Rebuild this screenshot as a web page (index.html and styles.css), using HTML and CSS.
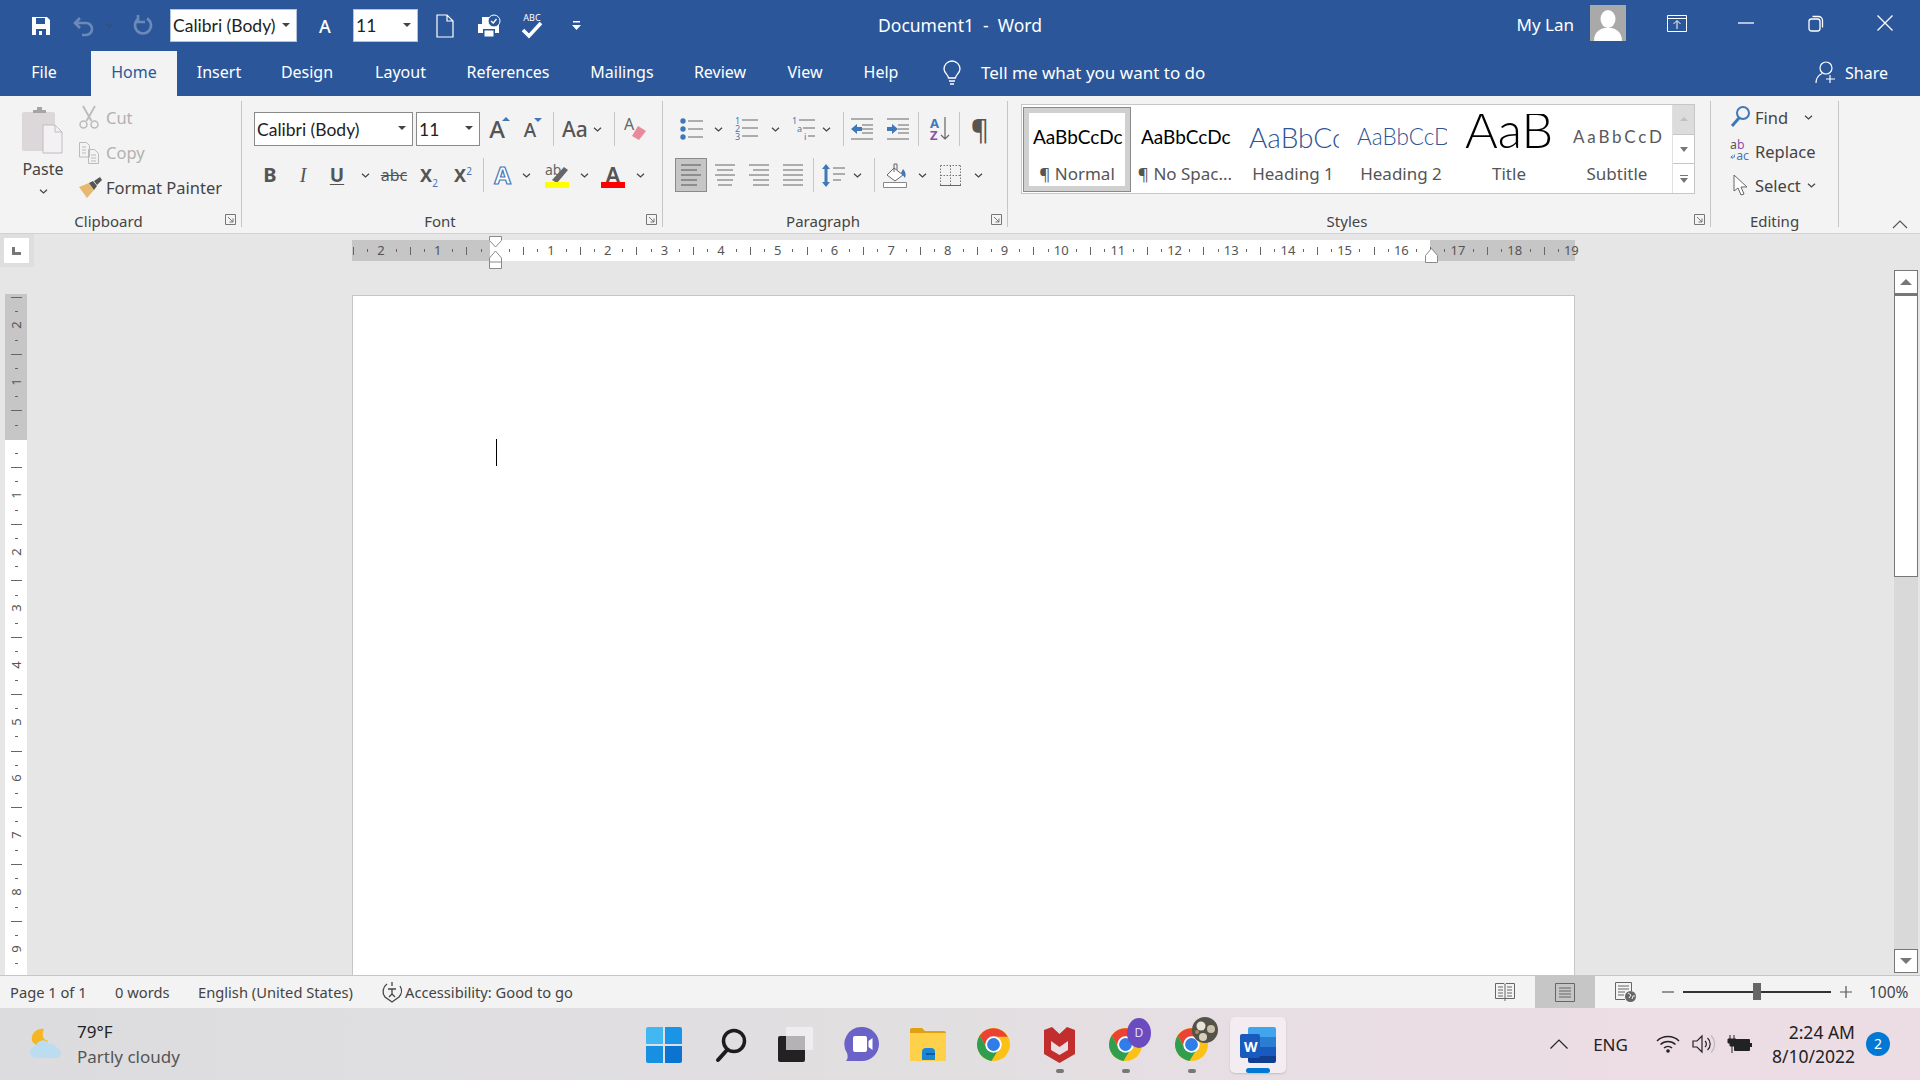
FILE: index.html
```html
<!DOCTYPE html>
<html>
<head>
  <title>Document1 - Word</title>
  <link rel="stylesheet" href="styles.css">
</head>
<body>
<svg class="defs" width="0" height="0">
  <symbol id="chev" viewBox="0 0 9 5"><path d="M1 .7l3.5 3.3L8 .7" fill="none" stroke="#444" stroke-width="1.2"/></symbol>
  <symbol id="launch" viewBox="0 0 11 11"><path d="M.5 10.5V.5h10v10zM3 3l5 5M8 4.5V8H4.5" fill="none" stroke="#777"/></symbol>
  <symbol id="chrome" viewBox="0 0 32 32">
    <circle cx="16" cy="16" r="16" fill="#fbc116"/>
    <path d="M16 8.5h13.9A16 16 0 0 0 2.6 7.3L9.5 19.6z" fill="#ea4335"/>
    <path d="M2.6 7.3A16 16 0 0 0 14 31.9l7.5-12.3H9.5z" fill="#2f9e4f"/>
    <circle cx="16" cy="16" r="8" fill="#fff"/>
    <circle cx="16" cy="16" r="6.2" fill="#2f7de8"/>
  </symbol>
</svg>

<div class="app">
  <!-- title bar -->
  <div class="titlebar">
    <div class="qat">
      <svg class="ic" width="20" height="20" viewBox="0 0 20 20"><path d="M1 1h15l3 3v15H1z" fill="#fff"/><path d="M5 2h9v6H5z" fill="#2b579a"/><path d="M5 13h10v6H5z" fill="#2b579a"/><path d="M8 15h3v4H8z" fill="#fff"/></svg>
      <i></i>
      <svg class="ic" width="22" height="20" viewBox="0 0 22 20"><path d="M7 2L2 7l5 5M2 7h11a6 6 0 0 1 0 12H9" fill="none" stroke="#6c8ab8" stroke-width="2.6"/></svg>
      <svg class="chev faded" width="9" height="5"><use href="#chev"/></svg>
      <svg class="ic" width="20" height="22" viewBox="0 0 20 22"><path d="M6 3.500a8 8 0 1 0 8 0M5 0v7h7" fill="none" stroke="#6c8ab8" stroke-width="2.6"/></svg>
      <div class="qat-box">Calibri (Body)<b class="drop"></b></div>
      <span class="qat-a">A</span>
      <i></i>
      <div class="qat-box qat-size">11<b class="drop"></b></div>
      <svg class="ic" width="18" height="24" viewBox="0 0 18 24"><path d="M1 1h10l6 6v16H1zM11 1v6h6" fill="none" stroke="#fff" stroke-width="1.200"/></svg>
      <svg class="ic" width="24" height="24" viewBox="0 0 24 24"><path d="M1 10h4V3h11v7h6v9h-4v-4H6v4H1z" fill="#fff"/><path d="M7 16h10v7H7z" fill="#fff" stroke="#2b579a"/><circle cx="17" cy="7" r="6" fill="#2b579a" stroke="#fff"/><path d="M14 7l2.200 2 3.300-4" fill="none" stroke="#fff" stroke-width="1.300"/></svg>
      <svg class="ic" width="24" height="28" viewBox="0 0 24 28"><text x="12" y="9" text-anchor="middle" class="abc">ABC</text><path d="M3 18l6 6L21 11" fill="none" stroke="#fff" stroke-width="3.600"/></svg>
      <svg class="ic" width="9" height="9" viewBox="0 0 9 9"><path d="M1 0h7v1.500H1zM0 4h9L4.500 9z" fill="#fff"/></svg>
    </div>
    <div class="doc-title">Document1&nbsp; -&nbsp; Word</div>
    <div class="win">
      <span class="user">My Lan</span>
      <svg class="avatar" width="36" height="36" viewBox="0 0 36 36"><rect width="36" height="36" fill="#a9a9a9"/><ellipse cx="18" cy="14" rx="7.500" ry="9" fill="#fff"/><path d="M4 36c0-10 7-12 10-13h8c3 1 10 3 10 13z" fill="#fff"/></svg>
      <span class="win-btn"><svg width="20" height="17" viewBox="0 0 20 17"><path d="M.5.500h19v16H.5zM.5 3.500h19M10 14V6M6.500 9L10 5.500 13.500 9" fill="none" stroke="#fff"/></svg></span>
      <span class="win-btn"><svg width="16" height="2" viewBox="0 0 16 2"><path d="M0 1h16" stroke="#fff" stroke-width="1.300"/></svg></span>
      <span class="win-btn"><svg width="16" height="17" viewBox="0 0 16 17"><rect x="1" y="4" width="11" height="12" rx="2.500" fill="none" stroke="#fff" stroke-width="1.300"/><path d="M4.500 1.500h6a4 4 0 0 1 4 4v7" fill="none" stroke="#fff" stroke-width="1.300"/></svg></span>
      <span class="win-btn"><svg width="16" height="16" viewBox="0 0 16 16"><path d="M.5.500l15 15M15.500.500l-15 15" stroke="#fff" stroke-width="1.300"/></svg></span>
    </div>
  </div>

  <!-- tabs -->
  <div class="tabs">
    <div class="tab-list">
      <span>File</span><i></i><span class="tab-on">Home</span><span>Insert</span><span>Design</span><span>Layout</span><span>References</span><span>Mailings</span><span>Review</span><span>View</span><span>Help</span>
      <span class="tell">
        <svg width="18" height="25" viewBox="0 0 18 25"><path d="M5.500 17c0-3-4.500-5-4.500-9a8 8 0 0 1 16 0c0 4-4.500 6-4.500 9zM6 20h6M7 23h4" fill="none" stroke="#fff" stroke-width="1.300"/></svg>
        <em>Tell me what you want to do</em>
      </span>
    </div>
    <div class="share">
      <svg width="22" height="23" viewBox="0 0 22 23"><circle cx="11" cy="7" r="6" fill="none" stroke="#fff" stroke-width="1.200"/><path d="M1 22c0-5 3-8 6-9.500M15 14v8M11 18h9" fill="none" stroke="#fff" stroke-width="1.200"/></svg>
      <span>Share</span>
    </div>
  </div>

  <!-- ribbon -->
  <div class="ribbon">
    <section class="group g-clip">
      <div class="clip">
        <div class="paste">
          <svg width="42" height="46" viewBox="0 0 42 46"><rect y="5" width="33" height="39" rx="2" fill="#dcd8da"/><path d="M11 6V3h4V0h5v3h4v3z" fill="#a8a4a6"/><path d="M21 18h12l7 7v21H21z" fill="#f4f1f5" stroke="#c0bcc0"/><path d="M33 18v7h7" fill="none" stroke="#c0bcc0"/></svg>
          <span>Paste</span>
          <svg class="chev" width="9" height="5"><use href="#chev"/></svg>
        </div>
        <div class="clip-list">
          <div class="clip-row off"><svg width="20" height="23" viewBox="0 0 20 23"><path d="M4 0l8.500 15M16 0L7.500 15" stroke="#bbb" stroke-width="1.800" fill="none"/><circle cx="4.500" cy="18.500" r="3.500" fill="none" stroke="#bbb" stroke-width="1.500"/><circle cx="15.500" cy="18.500" r="3.500" fill="none" stroke="#bbb" stroke-width="1.500"/></svg><span>Cut</span></div>
          <div class="clip-row off"><svg width="20" height="22" viewBox="0 0 20 22"><path d="M.5.500h7l3 3V15H.5zM9.500 7.500h6l4 4v10h-10zM3 5h4M3 8h4M3 11h4M12 13h5M12 16h5M12 19h5" fill="none" stroke="#bbb"/></svg><span>Copy</span></div>
          <div class="clip-row painter"><svg width="23" height="21" viewBox="0 0 23 21"><path d="M0 10l10-4 5 7-7 8z" fill="#e6b870"/><path d="M10 6l5 7 3-4-4-5zM15 4l6-4 2 3-5 5z" fill="#555"/></svg><span>Format Painter</span></div>
        </div>
      </div>
      <div class="label">Clipboard</div>
      <svg class="launch" width="11" height="11"><use href="#launch"/></svg>
    </section>

    <section class="group g-font">
      <div class="row font-r1">
        <div class="combo">Calibri (Body)<b class="drop"></b></div>
        <div class="combo combo-size">11<b class="drop"></b></div>
        <span class="fa grow">A<u class="tri up"></u></span>
        <span class="fa shrink">A<u class="tri down"></u></span>
        <s class="sep"></s>
        <span class="fa aa">Aa</span>
        <svg class="chev" width="9" height="5"><use href="#chev"/></svg>
        <s class="sep"></s>
        <svg class="ic" width="24" height="24" viewBox="0 0 24 24"><text x="0" y="13" class="ic-t">A</text><path d="M14 9l8 5-7 9-7-4z" fill="#e88a9c"/></svg>
      </div>
      <div class="row font-r2">
        <span class="fa bold">B</span>
        <span class="fa ital">I</span>
        <span class="fa und">U</span>
        <svg class="chev" width="9" height="5"><use href="#chev"/></svg>
        <span class="fa strike">abc</span>
        <span class="fa xs">X<sub>2</sub></span>
        <span class="fa xs">X<sup>2</sup></span>
        <s class="sep"></s>
        <span class="fa fx">A</span>
        <svg class="chev" width="9" height="5"><use href="#chev"/></svg>
        <i></i>
        <svg class="ic" width="24" height="25" viewBox="0 0 24 25"><text x="0" y="12" class="ic-t ic-s">ab</text><path d="M7 17l12-13 4 3-11 13z" fill="#666"/><path d="M0 19h24v6H0z" fill="#ff0"/></svg>
        <svg class="chev" width="9" height="5"><use href="#chev"/></svg>
        <span class="color-a">A<u></u></span>
        <svg class="chev" width="9" height="5"><use href="#chev"/></svg>
      </div>
      <div class="label">Font</div>
      <svg class="launch" width="11" height="11"><use href="#launch"/></svg>
    </section>

    <section class="group g-para">
      <div class="row para-r1">
        <svg class="ic" width="23" height="22" viewBox="0 0 23 22"><g fill="#3f78b8"><circle cx="3" cy="3" r="2.700"/><circle cx="3" cy="11" r="2.700"/><circle cx="3" cy="19" r="2.700"/></g><path d="M8 3h15M8 11h15M8 19h15" stroke="#666"/></svg>
        <svg class="chev" width="9" height="5"><use href="#chev"/></svg>
        <svg class="ic" width="23" height="24" viewBox="0 0 23 24"><g class="num"><text x="0" y="7">1</text><text x="0" y="15">2</text><text x="0" y="23">3</text></g><path d="M7 3h16M7 11h16M7 19h16" stroke="#666"/></svg>
        <svg class="chev" width="9" height="5"><use href="#chev"/></svg>
        <svg class="ic" width="23" height="24" viewBox="0 0 23 24"><g class="num"><text x="0" y="7">1</text><text x="5" y="15">a</text><text x="12" y="23">i</text></g><path d="M7 3h16M11 11h12M16 19h7" stroke="#666"/></svg>
        <svg class="chev" width="9" height="5"><use href="#chev"/></svg>
        <s class="sep"></s>
        <svg class="ic" width="23" height="22" viewBox="0 0 23 22"><path d="M0 1h22M11 7h11M11 11h11M11 15h11M0 21h22" stroke="#666"/><path d="M0 11l6-5v3h5v4H6v3z" fill="#3f78b8"/></svg>
        <svg class="ic" width="23" height="22" viewBox="0 0 23 22"><path d="M0 1h22M11 7h11M11 11h11M11 15h11M0 21h22" stroke="#666"/><path d="M11 11L5 6v3H0v4h5v3z" fill="#3f78b8"/></svg>
        <s class="sep"></s>
        <svg class="ic" width="19" height="24" viewBox="0 0 19 24"><text x="0" y="11" class="az az-a">A</text><text x="0" y="23" class="az az-z">Z</text><path d="M15 0v22M11 18l4 4 4-4" fill="none" stroke="#666" stroke-width="1.200"/></svg>
        <s class="sep"></s>
        <span class="pilcrow">¶</span>
      </div>
      <div class="row para-r2">
        <span class="align-on"><svg class="ic" width="20" height="22" viewBox="0 0 20 22"><path d="M0 1h20M0 6h16M0 11h20M0 16h16M0 21h16" stroke="#555"/></svg></span>
        <svg class="ic" width="20" height="22" viewBox="0 0 20 22"><path d="M0 1h20M2 6h16M0 11h20M2 16h16M3 21h14" stroke="#666"/></svg>
        <svg class="ic" width="20" height="22" viewBox="0 0 20 22"><path d="M0 1h20M4 6h16M0 11h20M4 16h16M4 21h16" stroke="#666"/></svg>
        <svg class="ic" width="20" height="22" viewBox="0 0 20 22"><path d="M0 1h20M0 6h20M0 11h20M0 16h20M0 21h20" stroke="#666"/></svg>
        <s class="sep"></s>
        <svg class="ic" width="23" height="23" viewBox="0 0 23 23"><path d="M4 0l4 5H5.500v13H8l-4 5-4-5h2.500V5H0z" fill="#3f78b8"/><path d="M11 4h12M11 10h12M11 16h8" stroke="#666"/></svg>
        <svg class="chev" width="9" height="5"><use href="#chev"/></svg>
        <s class="sep"></s>
        <svg class="ic" width="24" height="25" viewBox="0 0 24 25"><path d="M11 5l9 7-8 6-8-6z" fill="#fff" stroke="#666"/><path d="M11 9V1h3v6" fill="none" stroke="#666"/><path d="M20 6c3 3 3 6 2 9-2-2-2-4-4-5z" fill="#3f78b8"/><path d="M.5 19.500h23v5H.5z" fill="#fff" stroke="#888"/></svg>
        <svg class="chev" width="9" height="5"><use href="#chev"/></svg>
        <svg class="ic" width="21" height="21" viewBox="0 0 21 21"><path d="M.5.500h20M.5.500v20M20.500.500v20M10.500.500v20M.5 10.500h20" fill="none" stroke="#777" stroke-dasharray="1.500 1.500"/><path d="M0 20.500h21" stroke="#666"/></svg>
        <svg class="chev" width="9" height="5"><use href="#chev"/></svg>
      </div>
      <div class="label">Paragraph</div>
      <svg class="launch" width="11" height="11"><use href="#launch"/></svg>
    </section>

    <section class="group g-styles">
      <div class="gallery">
        <div class="style style-on"><div class="preview s-normal">AaBbCcDc</div><div class="style-name">¶ Normal</div></div>
        <div class="style"><div class="preview s-normal">AaBbCcDc</div><div class="style-name">¶ No Spac...</div></div>
        <div class="style"><div class="preview s-h1">AaBbCcDc</div><div class="style-name">Heading 1</div></div>
        <div class="style"><div class="preview s-h2">AaBbCcDc</div><div class="style-name">Heading 2</div></div>
        <div class="style"><div class="preview s-title">AaB</div><div class="style-name">Title</div></div>
        <div class="style"><div class="preview s-sub">AaBbCcDc</div><div class="style-name">Subtitle</div></div>
        <div class="gal-scroll">
          <span class="gal-up"><u class="gal-tri"></u></span>
          <span><u class="gal-tri"></u></span>
          <span><u class="gal-more"></u><u class="gal-tri"></u></span>
        </div>
      </div>
      <div class="label">Styles</div>
      <svg class="launch" width="11" height="11"><use href="#launch"/></svg>
    </section>

    <section class="group g-edit">
      <div class="edit-list">
        <div class="edit-row"><svg width="19" height="22" viewBox="0 0 19 22"><circle cx="12" cy="7" r="6" fill="none" stroke="#3f78b8" stroke-width="2"/><path d="M8 12l-7 8" stroke="#3f78b8" stroke-width="3"/></svg><span>Find</span><svg class="chev chev-find" width="9" height="5"><use href="#chev"/></svg></div>
        <div class="edit-row"><svg class="rep" width="24" height="24" viewBox="0 0 24 24"><text x="0" y="10" class="rep-ab">a<tspan fill="#8a50a8">b</tspan></text><text x="7" y="22" class="rep-ac">ac</text><path d="M5 16v3H1M3 17l-2 2 2 2" fill="none" stroke="#3f78b8"/></svg><span>Replace</span></div>
        <div class="edit-row"><svg width="15" height="22" viewBox="0 0 15 22"><path d="M1 1v16l4-3 3 7 3-1-3-7h6z" fill="#fff" stroke="#666"/></svg><span>Select</span><svg class="chev chev-sel" width="9" height="5"><use href="#chev"/></svg></div>
      </div>
      <div class="label">Editing</div>
    </section>

    <svg class="collapse" width="16" height="9" viewBox="0 0 16 9"><path d="M1 8l7-7 7 7" fill="none" stroke="#555" stroke-width="1.200"/></svg>
  </div>

  <!-- document area -->
  <div class="docarea">
    <div class="side">
      <div class="tabstop"><span><u></u></span></div>
      <div class="vruler">
        <span class="cell"><b>2</b></span><span class="cell"><b>1</b></span><span class="cell"></span>
        <span class="cell"><b>1</b></span><span class="cell"><b>2</b></span><span class="cell"><b>3</b></span><span class="cell"><b>4</b></span><span class="cell"><b>5</b></span><span class="cell"><b>6</b></span><span class="cell"><b>7</b></span><span class="cell"><b>8</b></span><span class="cell"><b>9</b></span>
      </div>
    </div>
    <div class="center">
      <div class="hruler">
        <span class="cell">2</span><span class="cell">1</span><span class="cell"></span>
        <span class="cell">1</span><span class="cell">2</span><span class="cell">3</span><span class="cell">4</span><span class="cell">5</span><span class="cell">6</span><span class="cell">7</span><span class="cell">8</span><span class="cell">9</span><span class="cell">10</span><span class="cell">11</span><span class="cell">12</span><span class="cell">13</span><span class="cell">14</span><span class="cell">15</span><span class="cell">16</span><span class="cell">17</span><span class="cell">18</span><span class="cell">19</span>
        <svg class="indent-l" width="13" height="33" viewBox="0 0 13 33"><path d="M.5.500h12v4L6.500 11 .5 4.500zM6.500 15l6 7v10.500H.5V22zM.5 26h12" fill="#fff" stroke="#8a8a8a"/></svg>
        <svg class="indent-r" width="13" height="15" viewBox="0 0 13 15"><path d="M6.500.5l6 7v7H.5v-7z" fill="#fff" stroke="#8a8a8a"/></svg>
      </div>
      <div class="page"><div class="caret"></div></div>
    </div>
    <div class="scrollcol">
      <div class="scrollbar">
        <span class="sb-btn"><u class="sb-tri"></u></span>
        <span class="sb-thumb"></span>
        <span class="sb-track"></span>
        <span class="sb-btn sb-down"><u class="sb-tri"></u></span>
      </div>
    </div>
  </div>

  <!-- status bar -->
  <div class="status">
    <span class="st st-page">Page 1 of 1</span>
    <span class="st st-words">0 words</span>
    <span class="st st-lang">English (United States)</span>
    <span class="st st-acc">
      <svg width="20" height="22" viewBox="0 0 20 22"><path d="M5 3a9 9 0 0 0-2 13l7 5 7-5a9 9 0 0 0 1-11" fill="none" stroke="#444" stroke-width="1.300"/><path d="M10 1v4M6 8h8M10 8v5M7 16l3-3 3 3" fill="none" stroke="#444" stroke-width="1.300"/></svg>
      Accessibility: Good to go
    </span>
    <div class="views">
      <span class="view"><svg width="20" height="20" viewBox="0 0 20 20"><path d="M.5 1.500h8.500l1 1 1-1h8.500v15H.5zM10 2.500V19M3 5h5M3 8h5M3 11h5M3 14h5M12 5h5M12 8h5M12 11h5M12 14h5" fill="none" stroke="#666"/></svg></span>
      <span class="view view-on"><svg width="20" height="19" viewBox="0 0 20 19"><path d="M.5.500h19v18H.5zM4 5h12M4 8h12M4 11h12M4 14h12" fill="none" stroke="#666"/></svg></span>
      <span class="view"><svg width="21" height="20" viewBox="0 0 21 20"><path d="M10 17.500H.5V.5h16V9M3 4h11M3 7h11M3 10h7M3 13h6" fill="none" stroke="#666"/><circle cx="15.500" cy="14.500" r="5.500" fill="#666"/><path d="M13 11l3 2-2 3M17 17l1-3 2 0" stroke="#f3f3f3" fill="none"/></svg></span>
    </div>
    <div class="zoombar">
      <svg width="12" height="2" viewBox="0 0 12 2"><path d="M0 1h12" stroke="#555" stroke-width="1.200"/></svg>
      <div class="slider"><u></u></div>
      <svg width="12" height="12" viewBox="0 0 12 12"><path d="M0 6h12M6 0v12" stroke="#555" stroke-width="1.200"/></svg>
      <span>100%</span>
    </div>
  </div>

  <!-- taskbar -->
  <div class="taskbar">
    <div class="weather">
      <svg width="33" height="30" viewBox="0 0 33 30"><path d="M14 0a10 10 0 0 0-12 12 12 12 0 0 0 12 5c4-1 4-4 3-6-3 1-6-5-3-11z" fill="#f4b623"/><path d="M6 29a6 6 0 0 1 0-12 7 7 0 0 1 13-2 6 6 0 0 1 7 3 6 6 0 0 1 2 11z" fill="#bcdcf0"/></svg>
      <div class="weather-text"><span>79°F</span><span class="weather-sub">Partly cloudy</span></div>
    </div>
    <div class="apps">
      <span class="app-slot">
        <svg width="36" height="36" viewBox="0 0 36 36"><path d="M2 0h15v17H0V2a2 2 0 0 1 2-2z" fill="#42b8f2"/><path d="M19 0h15a2 2 0 0 1 2 2v15H19z" fill="#1a94e6"/><path d="M0 19h17v17H2a2 2 0 0 1-2-2z" fill="#1890e2"/><path d="M19 19h17v15a2 2 0 0 1-2 2H19z" fill="#0a74d0"/></svg>
      </span>
      <span class="app-slot">
        <svg width="32" height="34" viewBox="0 0 32 34"><circle cx="19" cy="13" r="10.500" fill="none" stroke="#1c1c1c" stroke-width="3.500"/><path d="M12 22l-9 10" stroke="#1c1c1c" stroke-width="4" stroke-linecap="round"/></svg>
      </span>
      <span class="app-slot">
        <svg width="36" height="35" viewBox="0 0 36 35"><rect y="9" width="27" height="26" rx="2" fill="#222"/><rect x="8" width="27" height="23" rx="1" fill="#f2f0f2" fill-opacity=".85"/><rect x="8" y="9" width="19" height="14" fill="#b4b2b4"/></svg>
      </span>
      <span class="app-slot">
        <svg width="34" height="35" viewBox="0 0 34 35"><path d="M17 0a17 17 0 0 1 0 34H1c2-2 2-5 1-8A17 17 0 0 1 17 0z" fill="#6a62c8"/><path d="M8 11a2 2 0 0 1 2-2h10a2 2 0 0 1 2 2v12a2 2 0 0 1-2 2H10a2 2 0 0 1-2-2z" fill="#fff"/><path d="M23.500 14l4-3v12l-4-3z" fill="#fff"/></svg>
      </span>
      <span class="app-slot">
        <svg width="36" height="33" viewBox="0 0 36 33"><path d="M0 2a2 2 0 0 1 2-2h10l3 3h19a2 2 0 0 1 2 2v5H0z" fill="#e0a010"/><path d="M0 5h36v28H0z" fill="#ffd04a"/><path d="M12 32v-8a4 4 0 0 1 4-4h5a4 4 0 0 1 4 4v8z" fill="#1a86d8"/><path d="M16 26h9" stroke="#0c5aa0" stroke-width="2"/></svg>
      </span>
      <span class="app-slot"><svg width="33" height="33"><use href="#chrome"/></svg></span>
      <span class="app-slot dot">
        <svg width="31" height="36" viewBox="0 0 31 36"><path d="M0 3l8-3 7.500 7L23 0l8 3v24l-15.500 9L0 27z" fill="#c22e2e"/><path d="M7 14l8.500 6 8.500-6v9l-8.500 5L7 23z" fill="#ecdde2"/></svg>
      </span>
      <span class="app-slot dot">
        <span class="stack">
          <svg width="33" height="33"><use href="#chrome"/></svg>
          <span class="badge-d">D</span>
        </span>
      </span>
      <span class="app-slot dot">
        <span class="stack">
          <svg width="33" height="33"><use href="#chrome"/></svg>
          <svg class="badge-ball" width="26" height="26" viewBox="0 0 26 26"><circle cx="13" cy="13" r="13" fill="#55524a"/><circle cx="9" cy="9" r="4.500" fill="#e8e4d8"/><circle cx="19" cy="12" r="4" fill="#c8c0a8"/><circle cx="11" cy="20" r="4" fill="#d8d0bc"/><circle cx="5" cy="15" r="2" fill="#a88c60"/></svg>
        </span>
      </span>
      <span class="app-slot app-word">
        <svg width="36" height="36" viewBox="0 0 36 36"><path d="M8 2a2 2 0 0 1 2-2h24a2 2 0 0 1 2 2v8H8z" fill="#41a5ee"/><path d="M8 10h28v10H8z" fill="#2b7cd3"/><path d="M8 20h28v9H8z" fill="#185abd"/><path d="M8 29h28v5a2 2 0 0 1-2 2H10a2 2 0 0 1-2-2z" fill="#103f91"/><rect y="7" width="20" height="24" rx="2" fill="#185abd"/></svg>
        <b class="word-w">W</b>
      </span>
    </div>
    <div class="tray">
      <svg class="tray-up" width="18" height="10" viewBox="0 0 18 10"><path d="M.5 9.500L9 1l8.500 8.500" fill="none" stroke="#222" stroke-width="1.200"/></svg>
      <span class="tray-lang">ENG</span>
      <svg class="tray-ic" width="24" height="18" viewBox="0 0 24 18"><path d="M1 6a16 16 0 0 1 22 0M4.500 9.500a11 11 0 0 1 15 0M8 13a6 6 0 0 1 8 0" fill="none" stroke="#222" stroke-width="1.500"/><circle cx="12" cy="16" r="1.800" fill="#222"/></svg>
      <svg class="tray-ic" width="24" height="20" viewBox="0 0 24 20"><path d="M1 7h4l5-5v16l-5-5H1z" fill="none" stroke="#222" stroke-width="1.200"/><path d="M13 7a4 4 0 0 1 0 6M15.500 4a8 8 0 0 1 0 12" fill="none" stroke="#222" stroke-width="1.200"/><path d="M19 1.500a12 12 0 0 1 0 17" fill="none" stroke="#bbb" stroke-width="1.200"/></svg>
      <svg class="tray-ic" width="24" height="18" viewBox="0 0 24 18"><path d="M2 0v4M6 0v4M0 4h8v4H6v3H2V8H0zM4 11v7" stroke="#222" fill="#222"/><rect x="6" y="4" width="16" height="12" rx="1" fill="#222"/><path d="M22 8h2v4h-2z" fill="#222"/></svg>
      <div class="clock"><span>2:24 AM</span><span>8/10/2022</span></div>
      <span class="notif">2</span>
    </div>
  </div>
</div>
</body>
</html>
```
FILE: styles.css
```css
* {
    box-sizing: border-box;
}
body {
    margin: 0;
    font-family: "Noto Sans", sans-serif;
    color: #444;
    overflow: hidden;
}
.defs {
    position: absolute;
}
.app {
    width: 1920px;
    height: 1080px;
    display: flex;
    flex-direction: column;
    overflow: hidden;
}
i {
    display: block;
}
u {
    text-decoration: none;
}
svg {
    display: block;
    overflow: visible;
}
.ic, .chev {
    justify-self: center;
}
.faded {
    opacity: .45;
}

/* title bar */
.titlebar {
    height: 51px;
    background-color: #2b579a;
    color: #fff;
    display: grid;
    grid-template-columns: 1fr auto 1fr;
    align-items: center;
    font-size: 16px;
}
.qat {
    display: grid;
    grid-template-columns: 36px 6px 38px 12px 55px 127px 56px 0 65px 54px 34px 52px 36px;
    align-items: center;
    justify-items: center;
    padding-left: 23px;
}
.qat-box {
    width: 100%;
    height: 33px;
    margin-top: -1px;
    background-color: #fff;
    border: 1px solid #b5c3d8;
    color: #222;
    font-family: Lato, sans-serif;
    font-size: 17.5px;
    line-height: 31px;
    padding-left: 2px;
    position: relative;
    white-space: nowrap;
}
.drop {
    position: absolute;
    right: 6px;
    top: 13px;
    border-left: 4px solid transparent;
    border-right: 4px solid transparent;
    border-top: 4px solid #444;
}
.qat-a {
    font-size: 18px;
    font-weight: 500;
}
.abc {
    font-size: 9px;
    fill: #fff;
}
.doc-title {
    font-size: 17.5px;
    white-space: nowrap;
    margin-top: -2px;
}
.win {
    display: flex;
    justify-content: flex-end;
    align-items: center;
}
.user {
    margin-right: 16px;
    font-size: 17px;
    margin-top: -3px;
}
.avatar {
    margin-top: -5px;
    margin-right: 16px;
}
.win-btn {
    width: 69.5px;
    display: flex;
    justify-content: center;
    margin-top: -5px;
}

/* tabs */
.tabs {
    height: 45px;
    background-color: #2b579a;
    color: #fff;
    display: flex;
    justify-content: space-between;
    font-size: 16px;
}
.tab-list {
    display: grid;
    grid-template-columns: 88px 3px 86px 84px 92px 95px 120px 108px 88px 82px 70px auto;
    align-items: stretch;
}
.tab-list > span {
    text-align: center;
    line-height: 43px;
}
.tab-list .tab-on {
    background-color: #f3f3f3;
    color: #2b579a;
}
.tab-list .tell {
    display: flex;
    align-items: center;
    margin-left: 27px;
    text-align: left;
}
.tell em {
    font-style: normal;
    font-size: 17px;
    margin-left: 20px;
    margin-top: -2px;
}
.share {
    display: flex;
    align-items: center;
    padding-right: 32px;
    gap: 8px;
    margin-top: -2px;
}

/* ribbon */
.ribbon {
    height: 138px;
    background-color: #f3f3f3;
    border-bottom: 1px solid #d2d2d2;
    display: flex;
    padding-top: 5px;
    position: relative;
    font-size: 16.5px;
}
.group {
    height: 126px;
    border-right: 1px solid #c6c6c6;
    position: relative;
    flex-shrink: 0;
}
.label {
    position: absolute;
    left: 0;
    right: 24px;
    bottom: -4px;
    text-align: center;
    font-size: 15px;
    line-height: 20px;
}
.launch {
    position: absolute;
    right: 5px;
    bottom: 2px;
}
.g-clip {
    width: 242px;
}
.g-font {
    width: 421px;
    padding: 11px 0 0 12px;
}
.g-para {
    width: 345px;
    padding: 11px 0 0 12px;
}
.g-styles {
    width: 703px;
    padding: 3px 0 0 13px;
}
.g-edit {
    width: 128px;
    padding-left: 17px;
}
.g-edit .label {
    right: 0;
}

/* clipboard */
.clip {
    display: flex;
    padding-left: 20px;
}
.paste {
    width: 46px;
    margin-right: 13px;
    display: flex;
    flex-direction: column;
    align-items: center;
    padding-top: 6px;
    font-size: 16px;
}
.paste span {
    line-height: 22px;
    margin-top: 5px;
}
.paste .chev {
    margin-top: 9px;
}
.clip-list {
    margin-top: -1px;
}
.clip-row {
    height: 35px;
    display: flex;
    align-items: center;
    white-space: nowrap;
}
.clip-row svg {
    margin-right: 7px;
    flex-shrink: 0;
}
.painter svg {
    margin-right: 4px;
}
.off {
    color: #b1b1b1;
}

/* toolbar rows */
.row {
    display: grid;
    align-items: center;
    justify-items: center;
    height: 34px;
}
.font-r1 {
    grid-template-columns: 159px 67px 34px 32px 8px 38px 10px 13px 42px;
}
.font-r2, .para-r2 {
    margin-top: 12px;
}
.font-r2 {
    grid-template-columns: 32px 34px 34px 22px 36px 34px 34px 4px 37px 10px 14px 24px 30px 28px 26px;
}
.para-r1 {
    grid-template-columns: 33px 20px 36px 23px 32px 14px 11px 37px 34px 4px 40px 1px 40px;
}
.para-r2 {
    grid-template-columns: 32px 36px 32px 36px 3px 38px 10px 13px 40px 14px 42px 14px;
}
.sep {
    width: 1px;
    height: 34px;
    background-color: #c6c6c6;
    justify-self: end;
    text-decoration: none;
}
.combo {
    width: 100%;
    height: 34px;
    background-color: #fff;
    border: 1px solid #8a8a8a;
    color: #222;
    font-family: Lato, sans-serif;
    font-size: 17.5px;
    line-height: 34px;
    padding-left: 2px;
    position: relative;
    white-space: nowrap;
}
.combo-size {
    width: 64px;
    justify-self: end;
}
.fa {
    color: #555;
    position: relative;
    font-weight: 500;
    line-height: 1;
}
.grow {
    font-size: 24px;
}
.shrink {
    font-size: 19px;
    margin-top: 3px;
}
.tri {
    position: absolute;
    top: 0;
    left: 100%;
    border-left: 4px solid transparent;
    border-right: 4px solid transparent;
}
.tri.up {
    border-bottom: 4px solid #3f78b8;
    margin-left: -3px;
}
.tri.down {
    border-top: 4px solid #3f78b8;
    margin-left: -2px;
    top: -3px;
}
.aa {
    font-size: 21px;
    padding-left: 4px;
}
.bold {
    font-size: 20px;
    font-weight: 700;
}
.ital {
    font-size: 20px;
    font-style: italic;
    font-family: "Liberation Serif", serif;
}
.und {
    font-size: 19px;
    font-weight: 700;
    text-decoration: underline;
    text-underline-offset: 2px;
}
.strike {
    font-size: 16px;
    font-weight: 400;
    text-decoration: line-through;
}
.xs {
    font-size: 18px;
    font-weight: 700;
}
.xs sub, .xs sup {
    font-size: 10px;
    font-weight: 400;
    color: #3f78b8;
    line-height: 0;
}
.fx {
    font-size: 24px;
    font-weight: 700;
    color: #fff;
    -webkit-text-stroke: 1.2px #3f78b8;
}
.color-a {
    font-size: 22px;
    font-weight: 600;
    color: #555;
    line-height: 22px;
    display: flex;
    flex-direction: column;
    align-items: center;
    width: 24px;
}
.color-a u {
    width: 24px;
    height: 6px;
    background-color: #f00;
    margin-top: -3px;
}
.ic-t {
    font-size: 16px;
    fill: #666;
}
.ic-s {
    font-size: 14px;
}
.num text {
    font-size: 9px;
    fill: #3f78b8;
}
.az {
    font-size: 13px;
    font-weight: 700;
}
.az-a {
    fill: #3f78b8;
}
.az-z {
    fill: #8a50a8;
}
.pilcrow {
    font-size: 28px;
    color: #555;
    line-height: 1;
}
.align-on {
    width: 32px;
    height: 34px;
    background-color: #c6c6c6;
    border: 1px solid #8a8a8a;
    display: flex;
    align-items: center;
    justify-content: center;
}

/* style gallery */
.gallery {
    width: 674px;
    height: 90px;
    background-color: #fff;
    border: 1px solid #c6c6c6;
    display: flex;
    padding: 2px 0 0 1px;
    position: relative;
}
.style {
    width: 108px;
    height: 85px;
    padding: 6px 9px 0;
    flex-shrink: 0;
    border: 1px solid transparent;
    white-space: nowrap;
    overflow: hidden;
}
.style-on {
    border: 1px solid #8a8a8a;
    box-shadow: inset 0 0 0 5px #d0d0d0;
}
.preview {
    height: 46px;
    width: 90px;
    overflow: hidden;
    font-family: Lato, sans-serif;
    line-height: 46px;
    color: #000;
}
.s-normal {
    font-size: 19px;
}
.s-h1 {
    font-size: 28px;
    color: #2f5496;
    font-weight: 300;
}
.s-h2 {
    font-size: 22.5px;
    color: #2f5496;
    font-weight: 300;
}
.s-title {
    font-size: 50px;
    font-weight: 300;
    line-height: 30px;
}
.s-sub {
    font-size: 17px;
    color: #595959;
    letter-spacing: 2.8px;
}
.style-name {
    text-align: center;
    color: #555;
    font-size: 17px;
    margin: 3px -9px 0;
    line-height: 22px;
}
.gal-scroll {
    position: absolute;
    right: 0;
    top: 0;
    bottom: 0;
    width: 22px;
    border-left: 1px solid #e0e0e0;
    display: flex;
    flex-direction: column;
}
.gal-scroll span {
    flex: 1;
    display: flex;
    flex-direction: column;
    align-items: center;
    justify-content: center;
    border-bottom: 1px solid #c6c6c6;
}
.gal-scroll span:last-child {
    border-bottom: none;
}
.gal-up {
    background-color: #dcdcdc;
}
.gal-up .gal-tri {
    border-top: none;
    border-bottom: 4px solid #c0c0c0;
}
.gal-tri {
    border-left: 4px solid transparent;
    border-right: 4px solid transparent;
    border-top: 5px solid #777;
}
.gal-more {
    width: 8px;
    height: 1px;
    background-color: #777;
    margin-bottom: 2px;
}

/* editing */
.edit-row {
    height: 34.2px;
    display: flex;
    align-items: center;
    font-size: 16.5px;
}
.edit-row svg:first-child {
    width: 27px;
    padding: 0 4px 0 2px;
    flex-shrink: 0;
}
.edit-row .rep {
    padding: 0;
    width: 27px;
}
.edit-list {
    margin-top: -1px;
}
.chev-find {
    margin-left: 16px;
}
.chev-sel {
    margin-left: 6px;
}
.rep-ab {
    font-size: 14px;
    fill: #555;
}
.rep-ac {
    font-size: 14px;
    fill: #3f78b8;
}
.collapse {
    position: absolute;
    right: 12px;
    bottom: 4px;
}

/* document area */
.docarea {
    flex: 1;
    min-height: 0;
    background-color: #e6e6e6;
    display: grid;
    grid-template-columns: 352px 1223px 345px;
}
.side {
    display: flex;
    flex-direction: column;
    align-items: flex-start;
    min-height: 0;
}
.tabstop {
    width: 34px;
    height: 33px;
    background-color: #dedede;
    padding: 4px 5px 4px 4px;
}
.tabstop span {
    display: block;
    width: 25px;
    height: 25px;
    background-color: #fff;
    position: relative;
}
.tabstop u {
    position: absolute;
    left: 8px;
    top: 9px;
    width: 9px;
    height: 8px;
    border-left: 3px solid #777;
    border-bottom: 3px solid #777;
}
.vruler {
    margin: 27px 0 0 5px;
    width: 22px;
    flex: 1;
    min-height: 0;
    overflow: hidden;
    padding-top: 2.6px;
    display: flex;
    flex-direction: column;
    background:
        repeating-linear-gradient(180deg, #666 0 1px, transparent 1px 56.7px) center / 11px 100% no-repeat,
        repeating-linear-gradient(180deg, transparent 0 14.2px, #666 14.2px 15.2px, transparent 15.2px 28.35px) center / 3px 100% no-repeat,
        linear-gradient(180deg, #c6c6c6 0 146px, #fff 146px);
    background-origin: content-box, content-box, border-box;
}
.vruler .cell {
    height: 56.7px;
    flex-shrink: 0;
    display: flex;
    align-items: center;
    justify-content: center;
    font-size: 13px;
    color: #555;
}
.vruler b {
    font-weight: 400;
    transform: rotate(-90deg);
}
.center {
    padding-top: 6px;
    display: flex;
    flex-direction: column;
    min-height: 0;
}
.hruler {
    height: 21px;
    width: 1223px;
    flex-shrink: 0;
    padding-left: 0.6px;
    display: flex;
    position: relative;
    background:
        repeating-linear-gradient(90deg, #666 0 1px, transparent 1px 56.7px) left center / 100% 8px no-repeat,
        repeating-linear-gradient(90deg, transparent 0 14.2px, #666 14.2px 15.2px, transparent 15.2px 28.35px) left center / 100% 3px no-repeat,
        linear-gradient(90deg, #c6c6c6 0 138px, #fff 138px 1078px, #c6c6c6 1078px);
    background-origin: content-box, content-box, border-box;
}
.hruler .cell {
    width: 56.7px;
    flex-shrink: 0;
    text-align: center;
    font-size: 13px;
    line-height: 20px;
    color: #555;
}
.indent-l {
    position: absolute;
    left: 137px;
    top: -4px;
}
.indent-r {
    position: absolute;
    left: 1073px;
    top: 8px;
}
.page {
    flex: 1;
    margin-top: 34px;
    background-color: #fff;
    border: 1px solid #c6c6c6;
    border-bottom: none;
    padding: 143px 0 0 143px;
}
.caret {
    width: 1px;
    height: 27px;
    background-color: #000;
}
.scrollcol {
    display: flex;
    justify-content: flex-end;
    padding: 36px 2px 2px 0;
    min-height: 0;
}
.scrollbar {
    width: 24px;
    display: flex;
    flex-direction: column;
}
.sb-btn {
    height: 24px;
    background-color: #fff;
    border: 1px solid #777;
    display: flex;
    align-items: center;
    justify-content: center;
}
.sb-tri {
    border-left: 6px solid transparent;
    border-right: 6px solid transparent;
    border-bottom: 6px solid #777;
}
.sb-down .sb-tri {
    border-bottom: none;
    border-top: 6px solid #777;
}
.sb-thumb {
    height: 283px;
    background-color: #fff;
    border: 1px solid #777;
    border-top-width: 2px;
}
.sb-track {
    flex: 1;
    background-color: #d9d9d9;
}

/* status bar */
.status {
    height: 33px;
    flex-shrink: 0;
    background-color: #f3f3f3;
    border-top: 1px solid #c6c6c6;
    display: flex;
    align-items: center;
    font-size: 14.7px;
    white-space: nowrap;
}
.st-page {
    margin-left: 10px;
    width: 105px;
}
.st-words {
    width: 83px;
}
.st-lang {
    width: 184px;
}
.st-acc {
    display: flex;
    align-items: center;
    gap: 3px;
}
.views {
    margin-left: auto;
    display: flex;
    align-self: stretch;
}
.view {
    width: 60px;
    display: flex;
    align-items: center;
    justify-content: center;
}
.view-on {
    background-color: #c6c6c6;
}
.zoombar {
    display: flex;
    align-items: center;
    margin-left: 7px;
    width: 258px;
}
.slider {
    width: 148px;
    height: 2px;
    background-color: #333;
    margin: 0 9px;
    position: relative;
}
.slider u {
    position: absolute;
    left: 70px;
    top: -8px;
    width: 8px;
    height: 17px;
    background-color: #666;
}
.zoombar span {
    margin-left: 17px;
    font-size: 15.5px;
}

/* taskbar */
.taskbar {
    height: 72px;
    flex-shrink: 0;
    background: linear-gradient(90deg, #dcdcde 0%, #e2dfe1 50%, #eddde5 85%, #ecdce4 100%);
    display: grid;
    grid-template-columns: 628px auto 1fr;
    align-items: center;
}
.weather {
    display: flex;
    align-items: center;
    padding-left: 30px;
    gap: 14px;
}
.weather-text {
    display: flex;
    flex-direction: column;
    font-size: 17px;
    line-height: 25px;
    color: #222;
}
.weather-sub {
    color: #555;
}
.apps {
    display: grid;
    grid-template-columns: 71px 63px 67px 65px 68px 63px 69px 63px 69px 64px;
    height: 100%;
    align-items: center;
    justify-items: center;
}
.app-slot {
    position: relative;
    display: flex;
    justify-content: center;
    align-items: center;
    height: 56px;
    width: 56px;
    margin-top: 1px;
}
.dot::after {
    content: "";
    position: absolute;
    bottom: 0;
    left: 24px;
    width: 8px;
    height: 4px;
    border-radius: 2px;
    background-color: #777;
}
.stack {
    position: relative;
    display: block;
}
.badge-d {
    position: absolute;
    left: 18px;
    top: -10px;
    width: 24px;
    height: 30px;
    border-radius: 50%;
    background-color: #6a4cc0;
    color: #e4dcf4;
    font-size: 12px;
    line-height: 30px;
    text-align: center;
}
.badge-ball {
    position: absolute;
    left: 17px;
    top: -11px;
}
.app-word {
    background-color: #f3edf2;
    border-radius: 5px;
    box-shadow: 0 1px 2px rgba(0, 0, 0, .15);
}
.app-word::after {
    content: "";
    position: absolute;
    bottom: 0;
    left: 16px;
    width: 24px;
    height: 5px;
    border-radius: 3px;
    background-color: #0078d4;
}
.word-w {
    position: absolute;
    left: 14px;
    top: 20px;
    color: #fff;
    font-size: 14px;
}
.tray {
    display: flex;
    align-items: center;
    justify-content: flex-end;
    padding-right: 65px;
    color: #222;
}
.tray-up {
    margin-right: 25px;
}
.tray-lang {
    font-size: 17px;
    margin-right: 28px;
}
.tray-ic {
    margin-right: 12px;
}
.clock {
    display: flex;
    flex-direction: column;
    align-items: flex-end;
    font-size: 17.5px;
    line-height: 24px;
    margin-left: 8px;
}
.notif {
    position: absolute;
    right: 30px;
    bottom: 24px;
    width: 24px;
    height: 24px;
    border-radius: 50%;
    background-color: #0078d4;
    color: #fff;
    font-size: 14px;
    line-height: 24px;
    text-align: center;
}
```
